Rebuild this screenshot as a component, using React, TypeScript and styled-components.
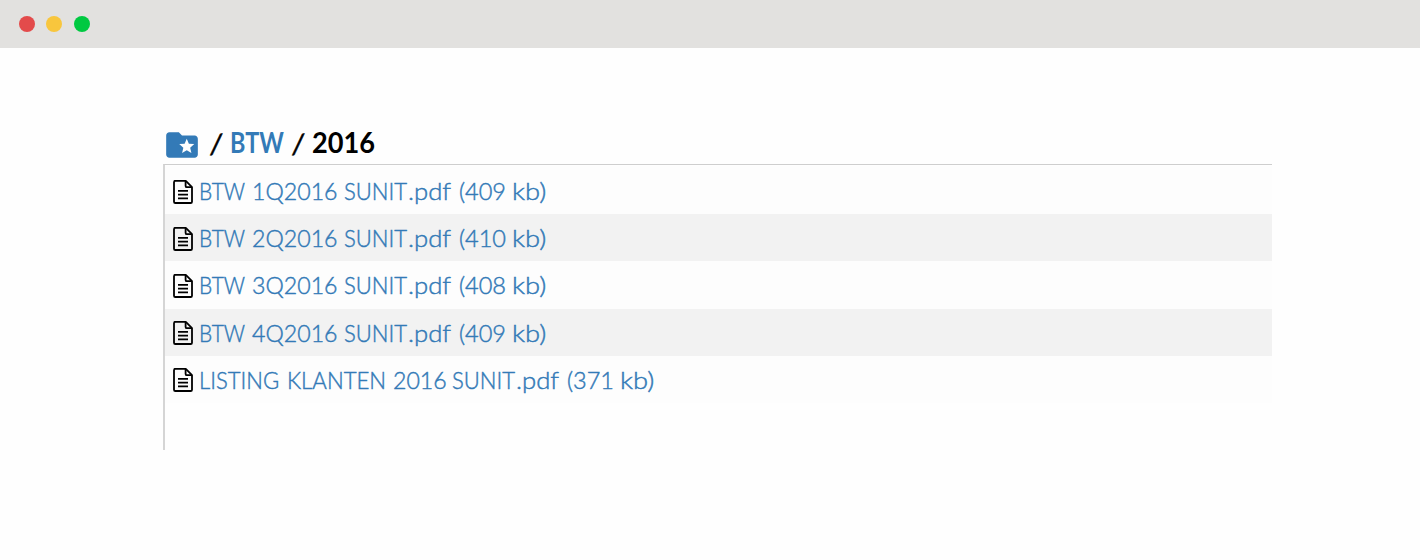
import React from "react";
import styled, { createGlobalStyle } from "styled-components";

const GlobalStyle = createGlobalStyle`
  * { box-sizing: border-box; }
  body { margin: 0; background: #fefefe; font-family: Lato, "Liberation Sans", sans-serif; }
`;

const Page = styled.div`
  height: 560px;
  overflow: hidden;
`;

const TitleBar = styled.header`
  display: flex;
  align-items: center;
  gap: 12px;
  height: 48px;
  padding-left: 19px;
  background: #e2e1df;
`;

const Dot = styled.span<{ $color: string }>`
  width: 16px;
  height: 16px;
  border-radius: 50%;
  background: ${(p) => p.$color};
  &:nth-child(2) { margin-left: -1px; }
`;

const Content = styled.main`
  width: 1109px;
  margin: 78px 0 0 163px;
`;

const Breadcrumb = styled.nav`
  display: flex;
  align-items: center;
  height: 38px;
  font-size: 28px;
  font-weight: 700;
  line-height: 38px;
  white-space: nowrap;
`;

const FolderIcon = styled.svg`
  width: 38px;
  height: 38px;
  fill: #337ab7;
  display: block;
  margin-right: 10px;
`;

const Crumb = styled.span<{ $width: number; $scale: number; $link?: boolean }>`
  flex: none;
  width: ${(p) => p.$width}px;
  margin-top: -6px;
  color: ${(p) => (p.$link ? "#337ab7" : "#000")};
  transform: scaleX(${(p) => p.$scale});
  transform-origin: 0 50%;
`;

const Slash = styled.span<{ $width: number }>`
  flex: none;
  width: ${(p) => p.$width}px;
  margin-top: -5px;
  font-weight: 400;
  -webkit-text-stroke: 0.5px #000;
  transform: translateX(-1px) skewX(-4deg);
`;

const FileList = styled.ul`
  list-style: none;
  margin: 0;
  padding: 1px 0 0;
  height: 286px;
  border-top: 1px solid #cecece;
  border-left: 2px solid #d5d5d5;
`;

const FileRow = styled.li`
  display: flex;
  align-items: center;
  height: 47.25px;
  padding: 2px 0 0 7px;
  background: #fdfdfd;
  &:first-child { height: 48px; padding-top: 3px; }
  &:nth-child(even) { background: #f2f2f2; }
`;

const FileIcon = styled.svg`
  width: 22px;
  height: 26px;
  flex: none;
  margin-right: 5px;
`;

const FileLink = styled.a`
  display: flex;
  color: #337ab7;
  font-size: 24px;
  font-weight: 300;
  line-height: 32px;
  margin-top: -1px;
  -webkit-text-stroke: 0.45px #337ab7;
`;

const Word = styled.span<{ $width: number; $scale: number }>`
  flex: none;
  width: ${(p) => p.$width}px;
  white-space: nowrap;
  transform: scaleX(${(p) => p.$scale});
  transform-origin: 0 50%;
`;

type Part = [text: string, width: number, scale: number];

const fileName: Part[] = [
  ["SUNIT", 64, 0.92],
  [".pdf", 50.5, 1.07],
];

const quarter = (label: string, size: string): Part[] => [
  ["BTW", 53, 0.87],
  [label, 92, 0.965],
  ...fileName,
  [`(${size}`, 53.5, 0.98],
  ["kb)", 40, 1.14],
];

const files: Part[][] = [
  quarter("1Q2016", "409"),
  quarter("2Q2016", "410"),
  quarter("3Q2016", "408"),
  quarter("4Q2016", "409"),
  [
    ["LISTING", 88, 0.92],
    ["KLANTEN", 106, 0.925],
    ["2016", 59, 0.965],
    ...fileName,
    ["(371", 53.5, 0.98],
    ["kb)", 40, 1.14],
  ],
];

export default function App() {
  return (
    <Page>
      <GlobalStyle />
      <TitleBar>
        <Dot $color="#e34b4b" />
        <Dot $color="#f8c63d" />
        <Dot $color="#00c941" />
      </TitleBar>
      <Content>
        <Breadcrumb>
          <FolderIcon viewBox="0 0 24 24">
            <path d="M20 6h-8l-2-2H4c-1.1 0-1.99.9-1.99 2L2 18c0 1.1.9 2 2 2h16c1.1 0 2-.9 2-2V8c0-1.1-.9-2-2-2zm-2.06 11L15 15.28 12.06 17l.78-3.33-2.59-2.24 3.41-.29L15 8l1.34 3.14 3.41.29-2.59 2.24.78 3.33z" />
          </FolderIcon>
          <Slash $width={19}>/</Slash>
          <Crumb $width={63} $scale={0.835} $link>BTW</Crumb>
          <Slash $width={19}>/</Slash>
          <Crumb $width={70} $scale={0.97}>2016</Crumb>
        </Breadcrumb>
        <FileList>
          {files.map((parts, i) => (
            <FileRow key={i}>
              <FileIcon viewBox="0 0 22 26" fill="none" stroke="#000" strokeWidth="1.8" strokeLinejoin="round">
                <path d="M2.6 1.9h11.2l6.2 6.2v14.6q0 1.3-1.3 1.3H3.3Q2 24 2 22.7V3.2Q2 1.9 3.3 1.9z" />
                <path d="M13.6 2v4.9q0 1.3 1.3 1.3H20" />
                <path d="M6 11.9h10M6 15.6h10M6 19.3h10" />
              </FileIcon>
              <FileLink>
                {parts.map(([text, width, scale], j) => (
                  <Word key={j} $width={width} $scale={scale}>{text}</Word>
                ))}
              </FileLink>
            </FileRow>
          ))}
        </FileList>
      </Content>
    </Page>
  );
}
